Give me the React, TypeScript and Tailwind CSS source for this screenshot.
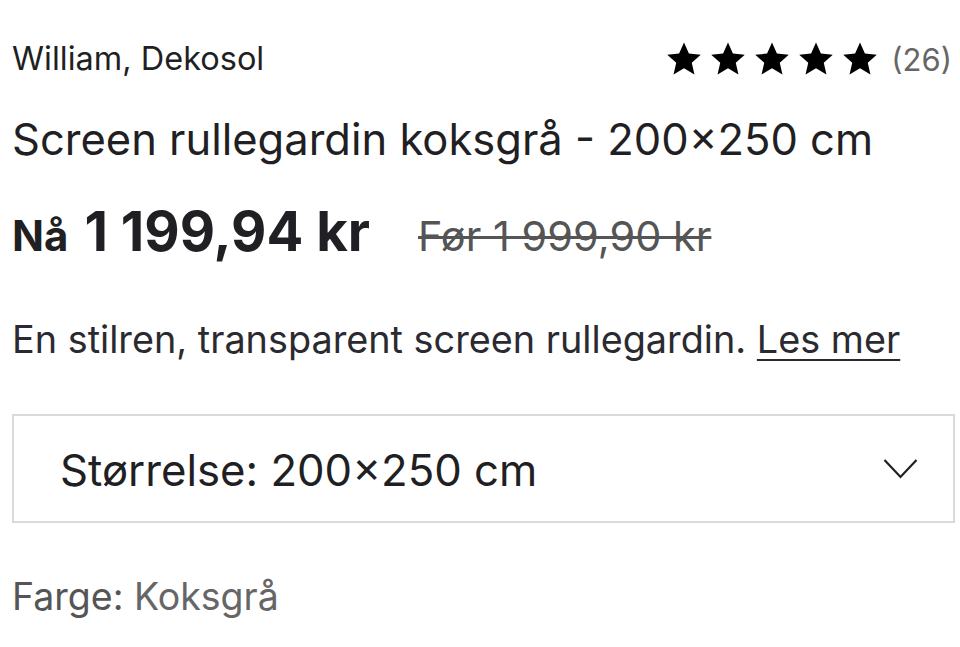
import React from "react";

function Star() {
  return (
    <svg viewBox="0 0 24 24" className="w-[38px] h-[38px]" fill="#000">
      <path d="M12 1.6l3.1 7 7.5.7-5.7 5 1.7 7.5L12 17.9l-6.6 3.9 1.7-7.5-5.7-5 7.5-.7z" />
    </svg>
  );
}

export default function App() {
  return (
    <div
      className="w-[960px] h-[647px] bg-white overflow-hidden text-[#1f1f24] pl-[12px] pr-[8px]"
      style={{ fontFamily: "Inter, 'Noto Sans', sans-serif" }}
    >
      <div className="flex items-center justify-between pt-[36px] h-[82px]">
        <div className="text-[32.5px] leading-none">William, Dekosol</div>
        <div className="flex items-center">
          <div className="flex gap-[6px]">
            <Star />
            <Star />
            <Star />
            <Star />
            <Star />
          </div>
          <span className="ml-[12px] text-[31px] text-[#666] leading-none">(26)</span>
        </div>
      </div>
      <div className="mt-[36px] text-[43.5px] leading-none whitespace-nowrap">
        Screen rullegardin koksgrå - 200×250 cm
      </div>
      <div className="mt-[42px] flex items-baseline leading-none h-[54px] whitespace-nowrap">
        <span className="text-[42px] font-bold">Nå</span>
        <span className="ml-[16px] text-[54.5px] font-bold">1 199,94 kr</span>
        <span className="ml-[48px] text-[41.5px] text-[#555] line-through decoration-[3px]">
          Før 1 999,90 kr
        </span>
      </div>
      <div className="mt-[63px] text-[37.8px] leading-none text-[#2a2a30] whitespace-nowrap">
        En stilren, transparent screen rullegardin.{" "}
        <span className="underline underline-offset-[6px] decoration-[2px]">Les mer</span>
      </div>
      <div className="mt-[56px] mr-[-3px] h-[109px] border-2 border-[#dadada] flex items-center justify-between pl-[46px] pr-[35px]">
        <span className="text-[43.7px] leading-none pt-[4px]">Størrelse: 200×250 cm</span>
        <svg width="35" height="22" viewBox="0 0 35 22" fill="none" stroke="#1f1f24" strokeWidth="2.2">
          <path d="M1.5 2l16 17 16-17" />
        </svg>
      </div>
      <div className="mt-[55px] text-[37.5px] leading-none text-[#666] whitespace-nowrap">
        <span className="text-[#555]">Farge:</span> Koksgrå
      </div>
    </div>
  );
}
